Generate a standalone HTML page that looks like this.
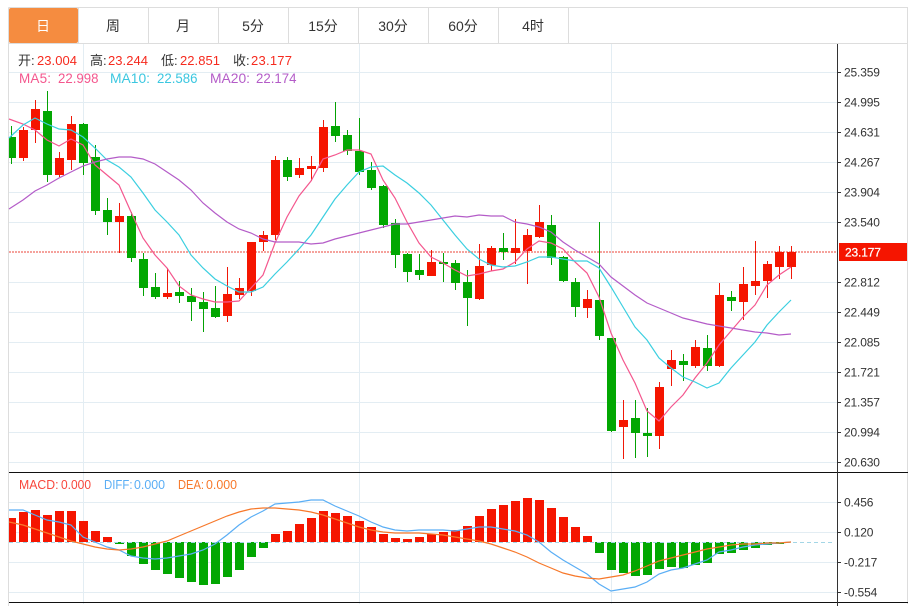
<!DOCTYPE html>
<html><head><meta charset="utf-8"><style>
html,body{margin:0;padding:0;background:#fff;width:916px;height:606px;overflow:hidden}
svg{display:block;font-family:"Liberation Sans","Noto Sans CJK SC",sans-serif}
.tab{font-size:14px;fill:#333;text-anchor:middle}
.ax{font-size:12px;fill:#333;letter-spacing:-.15px}
.i{font-size:13px}
</style></head><body>
<svg width="916" height="606" viewBox="0 0 916 606" xmlns="http://www.w3.org/2000/svg">
<!-- grid -->
<path d="M9 72.500H837M9 102.500H837M9 132.500H837M9 162.500H837M9 192.500H837M9 222.500H837M9 282.500H837M9 312.500H837M9 342.500H837M9 372.500H837M9 402.500H837M9 432.500H837M9 462.500H837M9 502.500H837M9 532.500H837M9 562.500H837M9 592.500H837" stroke="#e3edf3" stroke-width="1" fill="none"/>
<path d="M83.500 44V604M359.500 44V604M611.500 44V604" stroke="#e3edf3" fill="none"/>
<!-- frame -->
<path d="M8.500 7.500H907.500V604M8.500 7.500V606M8.500 43.500H907.500M78.500 8V43M148.500 8V43M218.500 8V43M288.500 8V43M358.500 8V43M428.500 8V43M498.500 8V43M568.500 8V43" stroke="#dddddd" fill="none"/>
<rect x="9" y="8" width="69" height="35" rx="2" fill="#f58c40"/>
<text x="43" y="31" class="tab" style="fill:#fff">日</text>
<text x="113" y="31" class="tab">周</text>
<text x="183" y="31" class="tab">月</text>
<text x="253" y="31" class="tab">5分</text>
<text x="323" y="31" class="tab">15分</text>
<text x="393" y="31" class="tab">30分</text>
<text x="463" y="31" class="tab">60分</text>
<text x="533" y="31" class="tab">4时</text>
<!-- info -->
<g class="i">
<text x="18" y="65" fill="#333">开:</text><text x="37" y="65" fill="#f62a1e" textLength="40">23.004</text>
<text x="90" y="65" fill="#333">高:</text><text x="108" y="65" fill="#f62a1e" textLength="40">23.244</text>
<text x="161" y="65" fill="#333">低:</text><text x="180" y="65" fill="#f62a1e" textLength="40">22.851</text>
<text x="233" y="65" fill="#333">收:</text><text x="251" y="65" fill="#f62a1e" textLength="41">23.177</text>
<text x="19" y="83" fill="#f4578e" style="font-size:13.500px" textLength="32">MA5:</text><text x="58" y="83" fill="#f4578e" style="font-size:13.500px" textLength="40.500" lengthAdjust="spacingAndGlyphs">22.998</text>
<text x="110" y="83" fill="#3bc7e0" style="font-size:13.500px" textLength="40" lengthAdjust="spacingAndGlyphs">MA10:</text><text x="157" y="83" fill="#3bc7e0" style="font-size:13.500px" textLength="40.500" lengthAdjust="spacingAndGlyphs">22.586</text>
<text x="210" y="83" fill="#b45cc8" style="font-size:13.500px" textLength="40" lengthAdjust="spacingAndGlyphs">MA20:</text><text x="256" y="83" fill="#b45cc8" style="font-size:13.500px" textLength="40.500" lengthAdjust="spacingAndGlyphs">22.174</text>
<text x="19" y="489" fill="#f8473c" textLength="39.500" lengthAdjust="spacingAndGlyphs">MACD:</text><text x="61" y="489" fill="#f8473c" textLength="30" lengthAdjust="spacingAndGlyphs">0.000</text>
<text x="104" y="489" fill="#5aaef5" textLength="28.500" lengthAdjust="spacingAndGlyphs">DIFF:</text><text x="134" y="489" fill="#5aaef5" textLength="31" lengthAdjust="spacingAndGlyphs">0.000</text>
<text x="178" y="489" fill="#f7782a" textLength="26" lengthAdjust="spacingAndGlyphs">DEA:</text><text x="206" y="489" fill="#f7782a" textLength="31" lengthAdjust="spacingAndGlyphs">0.000</text>
</g>
<!-- current price line -->
<path d="M9 252H837" stroke="#ee5a50" stroke-width="1.500" stroke-dasharray="2 1" opacity=".75" fill="none"/>
<!-- red wicks -->
<path fill="none" stroke="#f01808" stroke-width="1" d="M23.500 127V161M35.500 100V143M59.500 152V177M71.500 116V170M119.500 203V253M167.500 268V299M227.500 267V322M239.500 278V299M251.500 242V296M263.500 231V251M275.500 156V240M299.500 158V178M311.500 156V181M323.500 120V172M431.500 250V276M479.500 244V300M491.500 246V271M515.500 219V264M527.500 229V284M539.500 205V238M587.500 290V318M623.500 400V459M659.500 382V449M671.500 350V386M695.500 340V368M719.500 283V367M743.500 267V320M755.500 241V295M767.500 261V298M779.500 246V279M791.500 246V279"/>
<!-- green wicks -->
<path fill="none" stroke="#03a203" stroke-width="1" d="M11.500 126V164M47.500 91V182M83.500 123V175M95.500 145V215M107.500 198V235M131.500 212V262M143.500 253V296M155.500 273V299M179.500 281V303M191.500 288V321M203.500 292V332M215.500 286V318M287.500 157V181M335.500 102V142M347.500 130V155M359.500 118V175M371.500 162V190M383.500 185V228M395.500 219V268M407.500 253V282M419.500 254V280M443.500 253V282M455.500 260V290M467.500 270V326M503.500 233V260M551.500 215V265M563.500 256V282M575.500 278V317M599.500 222V340M611.500 338V432M635.500 400V458M647.500 408V457M683.500 354V381M707.500 335V371M731.500 291V311"/>
<!-- red bodies -->
<path fill="#f51500" d="M19 130h9v28h-9zM31 109h9v21h-9zM55 158h9v17h-9zM67 124h9v36h-9zM115 216h9v6h-9zM163 293h9v4h-9zM223 294h9v22h-9zM235 288h9v7h-9zM247 242h9v49h-9zM259 235h9v7h-9zM271 160h9v75h-9zM295 168h9v7h-9zM307 166h9v3h-9zM319 127h9v41h-9zM427 262h9v14h-9zM475 266h9v33h-9zM487 248h9v17h-9zM511 248h9v5h-9zM523 235h9v16h-9zM535 222h9v15h-9zM583 299h9v9h-9zM619 420h9v7h-9zM655 387h9v49h-9zM667 360h9v9h-9zM691 347h9v19h-9zM715 295h9v71h-9zM739 284h9v18h-9zM751 281h9v5h-9zM763 264h9v17h-9zM775 252h9v15h-9zM787 252h9v15h-9z"/>
<!-- green bodies -->
<path fill="#02a702" d="M9 137h7v21h-7zM43 111h9v64h-9zM79 124h9v39h-9zM91 157h9v54h-9zM103 210h9v12h-9zM127 216h9v42h-9zM139 259h9v29h-9zM151 287h9v10h-9zM175 292h9v4h-9zM187 296h9v6h-9zM199 302h9v7h-9zM211 308h9v9h-9zM283 160h9v17h-9zM331 126h9v10h-9zM343 135h9v16h-9zM355 151h9v21h-9zM367 170h9v18h-9zM379 186h9v39h-9zM391 223h9v32h-9zM403 254h9v18h-9zM415 270h9v5h-9zM439 262h9v2h-9zM451 263h9v20h-9zM463 282h9v16h-9zM499 248h9v4h-9zM547 225h9v33h-9zM559 257h9v24h-9zM571 282h9v25h-9zM595 300h9v36h-9zM607 338h9v93h-9zM631 418h9v15h-9zM643 433h9v3h-9zM679 361h9v4h-9zM703 348h9v18h-9zM727 297h9v4h-9z"/>
<!-- MA5 -->
<polyline fill="none" stroke="#f4578e" stroke-width="1.200" points="9,119 23,124 35,130 47,140 59,146 71,139 83,145 95,165 107,175 119,185 131,212 143,238 155,255 167,268 179,286 191,295 203,299 215,302 227,302 239,301 251,288 263,275 275,243 287,217 299,196 311,181 323,159 335,155 347,150 359,150 371,154 383,180 395,198 407,222 419,243 431,257 443,263 455,270 467,276 479,274 491,271 503,269 515,262 527,249 539,241 551,243 563,249 575,262 587,273 599,297 611,333 623,360 635,383 647,411 659,421 671,407 683,395 695,378 707,363 719,345 731,331 743,317 755,305 767,285 779,275 791,267"/>
<!-- MA10 -->
<polyline fill="none" stroke="#3bcfe0" stroke-width="1.200" points="9,138 23,125 35,118 47,124 59,129 71,130 83,137 95,148 107,160 119,167 131,177 143,193 155,210 167,222 179,235 191,255 203,268 215,279 227,286 239,292 251,292 263,287 275,274 287,262 299,249 311,235 323,217 335,199 347,185 359,172 371,167 383,166 395,175 407,183 419,193 431,205 443,220 455,235 467,249 479,259 491,265 503,267 515,266 527,262 539,257 551,257 563,259 575,261 587,261 599,268 611,287 623,307 635,327 647,340 659,358 671,368 683,377 695,382 707,388 719,383 731,368 743,355 755,342 767,325 779,312 791,300"/>
<!-- MA20 -->
<polyline fill="none" stroke="#b45cc8" stroke-width="1.200" points="9,209 23,200 35,191 47,185 59,178 71,172 83,166 95,162 107,159 119,157 131,157 143,159 155,164 167,172 179,180 191,190 203,203 215,213 227,222 239,229 251,233 263,239 275,242 287,242 299,242 311,244 323,243 335,239 347,236 359,233 371,230 383,227 395,224 407,224 419,222 431,220 443,218 455,216 467,217 479,215 491,216 503,216 515,222 527,224 539,227 551,232 563,242 575,250 587,257 599,264 611,277 623,286 635,295 647,303 659,308 671,313 683,318 695,321 707,324 719,326 731,328 743,330 755,332 767,333 779,335 791,334"/>
<!-- MACD red bars -->
<path fill="#f51500" d="M9 518h7v24h-7zM19 512h9v30h-9zM31 510h9v32h-9zM43 515h9v27h-9zM55 511h9v31h-9zM67 511h9v31h-9zM79 521h9v21h-9zM91 531h9v11h-9zM103 537h9v5h-9zM271 534h9v8h-9zM283 531h9v11h-9zM295 524h9v18h-9zM307 518h9v24h-9zM319 511h9v31h-9zM331 513h9v29h-9zM343 516h9v26h-9zM355 521h9v21h-9zM367 527h9v15h-9zM379 534h9v8h-9zM391 538h9v4h-9zM403 539h9v3h-9zM415 537h9v5h-9zM427 534h9v8h-9zM439 532h9v10h-9zM451 530h9v12h-9zM463 526h9v16h-9zM475 516h9v26h-9zM487 509h9v33h-9zM499 505h9v37h-9zM511 501h9v41h-9zM523 498h9v44h-9zM535 500h9v42h-9zM547 508h9v34h-9zM559 517h9v25h-9zM571 527h9v15h-9zM583 536h9v6h-9z"/>
<!-- MACD green bars -->
<path fill="#02a702" d="M115 542h9v2h-9zM127 542h9v14h-9zM139 542h9v22h-9zM151 542h9v28h-9zM163 542h9v32h-9zM175 542h9v36h-9zM187 542h9v40h-9zM199 542h9v43h-9zM211 542h9v42h-9zM223 542h9v35h-9zM235 542h9v28h-9zM247 542h9v15h-9zM259 542h9v6h-9zM595 542h9v11h-9zM607 542h9v28h-9zM619 542h9v31h-9zM631 542h9v34h-9zM643 542h9v33h-9zM655 542h9v27h-9zM667 542h9v25h-9zM679 542h9v26h-9zM691 542h9v23h-9zM703 542h9v21h-9zM715 542h9v12h-9zM727 542h9v11h-9zM739 542h9v8h-9zM751 542h9v6h-9zM763 542h9v3h-9zM775 542h9v2h-9z"/>
<path d="M9 542.500H835" stroke="#a3d6e6" stroke-dasharray="4 3" fill="none"/>
<!-- DIFF -->
<polyline fill="none" stroke="#5aaef5" stroke-width="1.200" points="9,510 23,510 35,515 47,520 59,522 71,525 83,537 95,542 107,547 119,550 131,556 143,558 155,559 167,558 179,556 191,554 203,550 215,544 227,535 239,525 251,517 263,511 275,504 287,503 299,502 311,500 323,500 335,506 347,511 359,516 371,522 383,527 395,530 407,531 419,530 431,530 443,530 455,531 467,529 479,527 491,527 503,529 515,531 527,535 539,542 551,552 563,560 575,567 587,574 599,584 611,591 623,589 635,587 647,582 659,574 671,570 683,568 695,564 707,560 719,552 731,550 743,547 755,545 767,544 779,543 791,542"/>
<!-- DEA -->
<polyline fill="none" stroke="#f7782a" stroke-width="1.200" points="9,522 23,525 35,529 47,533 59,537 71,541 83,544 95,547 107,549 119,550 131,549 143,547 155,544 167,541 179,536 191,531 203,526 215,521 227,516 239,512 251,509 263,508 275,508 287,509 299,510 311,512 323,515 335,519 347,523 359,527 371,530 383,532 395,533 407,533 419,533 431,534 443,535 455,537 467,539 479,541 491,544 503,548 515,552 527,557 539,563 551,568 563,573 575,576 587,578 599,579 611,577 623,575 635,571 647,566 659,561 671,558 683,555 695,552 707,549 719,547 731,545 743,544 755,544 767,543 779,543 791,542"/>
<!-- panel lines & axis -->
<path d="M9 472.500H908M9 602.500H908" stroke="#111" fill="none"/>
<path d="M837.500 44V606" stroke="#333" fill="none"/>
<path d="M837 72.500h4M837 102.500h4M837 132.500h4M837 162.500h4M837 192.500h4M837 222.500h4M837 282.500h4M837 312.500h4M837 342.500h4M837 372.500h4M837 402.500h4M837 432.500h4M837 462.500h4M837 502.500h4M837 532.500h4M837 562.500h4M837 592.500h4" stroke="#333" fill="none"/>
<g class="ax">
<text x="844" y="76.500">25.359</text>
<text x="844" y="106.500">24.995</text>
<text x="844" y="136.500">24.631</text>
<text x="844" y="166.500">24.267</text>
<text x="844" y="196.500">23.904</text>
<text x="844" y="226.500">23.540</text>
<text x="844" y="286.500">22.812</text>
<text x="844" y="316.500">22.449</text>
<text x="844" y="346.500">22.085</text>
<text x="844" y="376.500">21.721</text>
<text x="844" y="406.500">21.357</text>
<text x="844" y="436.500">20.994</text>
<text x="844" y="466.500">20.630</text>
<text x="844" y="506.500">0.456</text>
<text x="844" y="536.500">0.120</text>
<text x="844" y="566.500">-0.217</text>
<text x="844" y="596.500">-0.554</text>
</g>
<rect x="839" y="243" width="68" height="18" fill="#f51500"/>
<text x="845" y="256.500" class="ax" style="fill:#fff;stroke:#fff;stroke-width:.25px">23.177</text>
</svg>
</body></html>
